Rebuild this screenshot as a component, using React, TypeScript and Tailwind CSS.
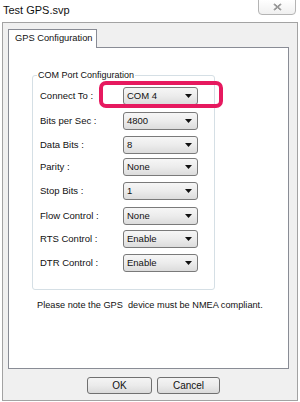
import { ReactNode } from 'react'

const rows = [
  { label: 'Connect To :', value: 'COM 4', gap: 'mt-[11px]' },
  { label: 'Bits per Sec :', value: '4800', gap: 'mt-[7px]' },
  { label: 'Data Bits :', value: '8', gap: 'mt-[6px]' },
  { label: 'Parity :', value: 'None', gap: 'mt-[4px]' },
  { label: 'Stop Bits :', value: '1', gap: 'mt-[6px]' },
  { label: 'Flow Control :', value: 'None', gap: 'mt-[7px]' },
  { label: 'RTS Control :', value: 'Enable', gap: 'mt-[5px]' },
  { label: 'DTR Control :', value: 'Enable', gap: 'mt-[6px]' },
]

function Select({ value }: { value: string }) {
  return (
    <div className="w-[75px] h-[18px] flex items-center justify-between rounded-[3px] border border-[#7a7a7a] bg-gradient-to-b from-[#f6f6f6] via-[#ececec] to-[#dcdcdc] pl-[3px] pr-[5px]">
      <span className="text-[9.5px] leading-none text-[#111]">{value}</span>
      <svg width="7" height="4" viewBox="0 0 7 4">
        <path d="M0 0h7L3.5 4z" fill="#111" />
      </svg>
    </div>
  )
}

function Button({ children, w }: { children: ReactNode; w: string }) {
  return (
    <div className={`${w} h-[17px] flex items-center justify-center rounded-[3px] border border-[#707070] bg-gradient-to-b from-[#f4f4f4] via-[#ebebeb] to-[#dadada] text-[10px] text-[#111]`}>
      {children}
    </div>
  )
}

export default function App() {
  return (
    <div
      className="relative w-[300px] h-[402px] bg-white overflow-hidden"
      style={{ fontFamily: '"Liberation Sans", Arial, sans-serif' }}
    >
      {/* title bar */}
      <div className="h-[22px] flex items-start justify-between">
        <span className="ml-[3px] mt-[4px] text-[11px] leading-[13px] text-[#111]">Test GPS.svp</span>
        <div className="mr-[4px] -mt-px w-[38px] h-[16px] flex items-center justify-center rounded-b-[4px] border border-[#b4b4b4] bg-gradient-to-b from-white to-[#f0f0f0]">
          <svg width="9" height="8" viewBox="0 0 9 8">
            <path d="M1 1l7 6M8 1L1 7" stroke="#6b6b6b" strokeWidth="1.6" fill="none" />
            <path d="M1 1l7 6M8 1L1 7" stroke="#d8d8d8" strokeWidth="0.5" fill="none" />
          </svg>
        </div>
      </div>

      {/* window body */}
      <div className="ml-[2px] w-[296px] h-[379px] border border-[#a3a3a3] bg-[#f0f0f0] pl-[5px] pt-[6px]">
        <div className="relative z-10 -mb-px w-[89px] h-[19px] border border-b-0 border-[#898c95] bg-white flex items-center pl-[6px]">
          <span className="whitespace-nowrap text-[9.3px] text-[#111]">GPS Configuration</span>
        </div>
        <div className="w-[281px] h-[322px] border border-[#898c95] bg-white pt-[27px] pl-[23px]">
          <div className="relative w-[183px] h-[215px] rounded-[3px] border border-[#d5dfe5] pl-[7px]">
            <span className="absolute -top-[7px] left-[4px] bg-white px-[1px] text-[9px] leading-[12px] text-[#111]">
              COM Port Configuration
            </span>
            {rows.map((r) => (
              <div key={r.label} className={`${r.gap} flex items-center`}>
                <span className="w-[83px] text-[9.5px] text-[#111]">{r.label}</span>
                <Select value={r.value} />
              </div>
            ))}
          </div>
          <p className="mt-[9px] ml-[5px] whitespace-nowrap text-[9.2px] leading-[12px] text-[#111]">
            Please note the GPS&nbsp; device must be NMEA compliant.
          </p>
        </div>
        <div className="mt-[8px] pl-[79px] flex gap-[5px]">
          <Button w="w-[65px]">OK</Button>
          <Button w="w-[63px]">Cancel</Button>
        </div>
      </div>

      {/* highlight annotation */}
      <div className="absolute left-[99px] top-[81px] w-[124px] h-[27px] rounded-[7px] border-4 border-[#e6195f]" />
    </div>
  )
}
